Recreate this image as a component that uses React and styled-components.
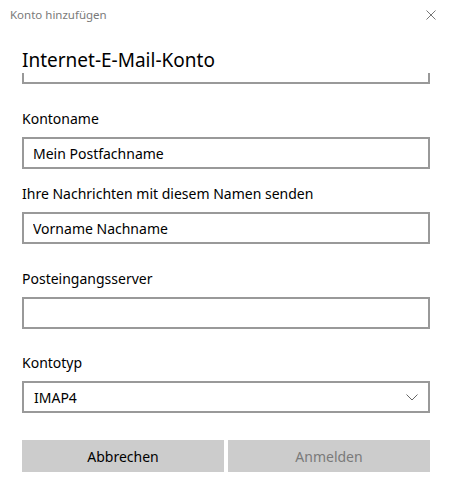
import React from "react";
import styled, { createGlobalStyle } from "styled-components";

const GlobalStyle = createGlobalStyle`
  html, body {
    margin: 0;
    padding: 0;
    background: #fff;
  }
  body {
    font-family: "Noto Sans", "Liberation Sans", sans-serif;
    color: #000;
  }
  * {
    box-sizing: border-box;
  }
`;

const Dialog = styled.div`
  width: 454px;
  height: 486px;
  display: flex;
  flex-direction: column;
  background: #fff;
  overflow: hidden;
`;

const TitleBar = styled.div`
  height: 29px;
  display: flex;
  align-items: center;
  justify-content: space-between;
  padding: 0 18px 0 10px;
`;

const Title = styled.span`
  font-size: 11.5px;
  color: #7a7a7a;
`;

const CloseButton = styled.button`
  width: 10px;
  height: 10px;
  padding: 0;
  border: none;
  background: none;
  display: flex;
  cursor: pointer;
`;

const Content = styled.div`
  display: flex;
  flex-direction: column;
  padding: 0 24px 0 22px;
`;

const Heading = styled.h1`
  margin: 18px 0 0;
  font-size: 19px;
  font-weight: 400;
  line-height: 26px;
`;

const ClippedBox = styled.div`
  height: 11px;
  border: 2px solid #999;
  border-top: none;
`;

const Label = styled.label`
  display: block;
  margin-top: ${(p) => p.$gap}px;
  margin-bottom: 8px;
  font-size: 14px;
  line-height: 20px;
`;

const Input = styled.input`
  width: 100%;
  height: 32px;
  border: 2px solid #999;
  padding: 0 9px;
  font-family: inherit;
  font-size: 14px;
  color: #000;
  background: #fff;
  outline: none;
`;

const SelectBox = styled.div`
  height: 32px;
  border: 2px solid #999;
  padding: 0 10px 0 10px;
  display: flex;
  align-items: center;
  justify-content: space-between;
  font-size: 14px;
`;

const Buttons = styled.div`
  margin-top: 27px;
  display: grid;
  grid-template-columns: 1fr 1fr;
  gap: 4px;
`;

const Button = styled.button`
  height: 32px;
  border: none;
  background: #ccc;
  font-family: inherit;
  font-size: 14px;
  color: ${(p) => (p.disabled ? "#7a7a7a" : "#000")};
`;

const fields = [
  { label: "Kontoname", value: "Mein Postfachname", gap: 25 },
  { label: "Ihre Nachrichten mit diesem Namen senden", value: "Vorname Nachname", gap: 15 },
  { label: "Posteingangsserver", value: "", gap: 25 },
];

const App = () => {
  return (
    <Dialog>
      <GlobalStyle />
      <TitleBar>
        <Title>Konto hinzufügen</Title>
        <CloseButton aria-label="Schließen">
          <svg width="10" height="10" viewBox="0 0 10 10">
            <path d="M0.5 0.5 L9.5 9.5 M9.5 0.5 L0.5 9.5" stroke="#777" strokeWidth="1" fill="none" />
          </svg>
        </CloseButton>
      </TitleBar>
      <Content>
        <Heading>Internet-E-Mail-Konto</Heading>
        <ClippedBox />
        {fields.map((f) => (
          <div key={f.label}>
            <Label $gap={f.gap}>{f.label}</Label>
            <Input defaultValue={f.value} />
          </div>
        ))}
        <Label $gap={24}>Kontotyp</Label>
        <SelectBox>
          <span>IMAP4</span>
          <svg width="12" height="7" viewBox="0 0 12 7">
            <path d="M0.5 0.5 L6 6 L11.5 0.5" stroke="#666" strokeWidth="1" fill="none" />
          </svg>
        </SelectBox>
        <Buttons>
          <Button>Abbrechen</Button>
          <Button disabled>Anmelden</Button>
        </Buttons>
      </Content>
    </Dialog>
  );
};

export default App;
